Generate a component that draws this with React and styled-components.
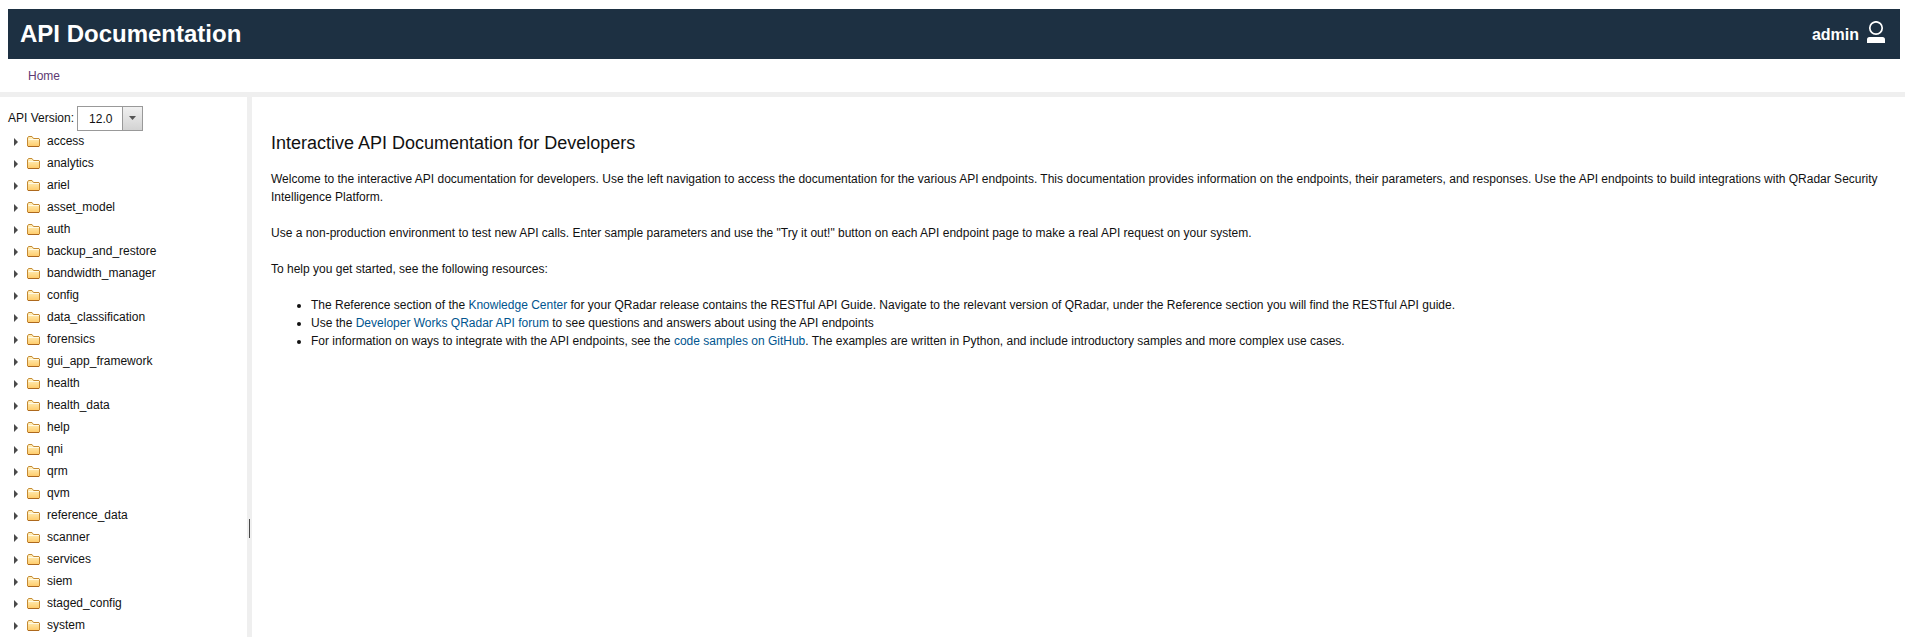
import React from 'react';
import styled, { createGlobalStyle } from 'styled-components';

const GlobalStyle = createGlobalStyle`
  *, *::before, *::after { box-sizing: border-box; }
  body {
    margin: 0;
    background: #fff;
    color: #111;
    font: 12px/18px "Liberation Sans", Helvetica, Arial, sans-serif;
  }
`;

const Page = styled.div`
  display: flex;
  flex-direction: column;
  height: 637px;
  overflow: hidden;
`;

const Header = styled.header`
  display: flex;
  flex: none;
  align-items: center;
  justify-content: space-between;
  height: 50px;
  margin: 9px 5px 0 8px;
  padding: 0 15px 0 12px;
  background: #1d3042;
  color: #fff;
`;

const Title = styled.h1`
  margin: 0;
  font-size: 24px;
  line-height: 48px;
  font-weight: 700;
`;

const User = styled.div`
  display: flex;
  align-items: center;
  gap: 8px;
  font-size: 16px;
  font-weight: 700;
`;

const UserName = styled.span`
  padding-top: 1px;
`;

const UserSvg = styled.svg`
  margin-bottom: 4px;
`;

const Crumbs = styled.nav`
  flex: none;
  height: 38px;
  padding: 8px 28px 0;
  border-bottom: 5px solid #efefef;
`;

const CrumbLink = styled.a`
  color: #5e3a73;
`;

const Body = styled.div`
  display: flex;
  flex: 1;
  min-height: 0;
`;

const Sidebar = styled.aside`
  flex: none;
  width: 247px;
  padding: 9px 0 0 8px;
  overflow: hidden;
`;

const VersionRow = styled.div`
  display: flex;
  align-items: center;
  gap: 3px;
  height: 25px;
`;

const VersionLabel = styled.span`
  padding-bottom: 2px;
`;

const Select = styled.div`
  display: flex;
  width: 66px;
  height: 25px;
  border: 1px solid #999;
  background: #fff;
`;

const SelectValue = styled.span`
  flex: 1;
  padding-left: 11px;
  line-height: 24px;
`;

const SelectButton = styled.span`
  display: flex;
  align-items: center;
  justify-content: center;
  width: 20px;
  padding-bottom: 1px;
  border-left: 1px solid #999;
  background: linear-gradient(#f0f0f0, #d3d3d3);
`;

const Tree = styled.ul`
  margin: 0;
  padding: 0;
  list-style: none;
`;

const TreeItem = styled.li`
  display: flex;
  align-items: center;
  height: 22px;
  padding-left: 6px;
`;

const TreeLabel = styled.span`
  margin-left: 7px;
  line-height: 20px;
  padding-bottom: 2px;
`;

const Splitter = styled.div`
  display: flex;
  flex: none;
  width: 5px;
  padding: 422px 0 0 2px;
  background: #efefef;
`;

const Grip = styled.div`
  width: 1px;
  height: 19px;
  background: #4a4a4a;
`;

const Main = styled.main`
  flex: 1;
  min-width: 0;
  padding: 35px 20px 0 19px;
`;

const Heading = styled.h2`
  margin: 0 0 16px;
  font-size: 18px;
  line-height: 22px;
  font-weight: 400;
`;

const Paragraph = styled.p`
  margin: 0 0 18px;
`;

const Resources = styled.ul`
  margin: 0;
  padding-left: 40px;
`;

const Link = styled.a`
  color: #00558f;
`;

const folders = [
  'access', 'analytics', 'ariel', 'asset_model', 'auth', 'backup_and_restore',
  'bandwidth_manager', 'config', 'data_classification', 'forensics',
  'gui_app_framework', 'health', 'health_data', 'help', 'qni', 'qrm', 'qvm',
  'reference_data', 'scanner', 'services', 'siem', 'staged_config', 'system',
];

function UserIcon() {
  return (
    <UserSvg width="18" height="22" viewBox="0 0 18 22">
      <circle cx="9" cy="7" r="6.200" fill="none" stroke="#fff" strokeWidth="1.700" />
      <path d="M0 22v-3.500a2.500 2.500 0 0 1 2.500-2.500h13a2.500 2.500 0 0 1 2.500 2.500V22z" fill="#fff" />
    </UserSvg>
  );
}

function Arrow() {
  return (
    <svg width="4" height="8" viewBox="0 0 4 8">
      <path d="M0 0l4 4-4 4z" fill="#4a4a4a" />
    </svg>
  );
}

const FolderSvg = styled.svg`
  margin: 0 0 1px 9px;
`;

function Folder() {
  return (
    <FolderSvg width="13" height="11" viewBox="0 0 13 11">
      <defs>
        <linearGradient id="folderFill" x1="0" y1="0" x2="0" y2="1">
          <stop offset="0" stopColor="#fff3c4" />
          <stop offset="1" stopColor="#ffcb68" />
        </linearGradient>
      </defs>
      <path d="M.5 10V2L1.500.5H5L6.500 2.500H12L12.500 3V10L12 10.500H1z" fill="url(#folderFill)" stroke="#c58a32" />
      <path d="M1.500 3.500H12" stroke="#fffae6" />
      <path d="M1 10.500H12" stroke="#ad681d" />
    </FolderSvg>
  );
}

export default function App() {
  return (
    <>
      <GlobalStyle />
      <Page>
        <Header>
          <Title>API Documentation</Title>
          <User>
            <UserName>admin</UserName>
            <UserIcon />
          </User>
        </Header>
        <Crumbs>
          <CrumbLink>Home</CrumbLink>
        </Crumbs>
        <Body>
          <Sidebar>
            <VersionRow>
              <VersionLabel>API Version:</VersionLabel>
              <Select>
                <SelectValue>12.0</SelectValue>
                <SelectButton>
                  <svg width="7" height="4" viewBox="0 0 7 4">
                    <path d="M0 0h7L3.500 4z" fill="#555" />
                  </svg>
                </SelectButton>
              </Select>
            </VersionRow>
            <Tree>
              {folders.map((name) => (
                <TreeItem key={name}>
                  <Arrow />
                  <Folder />
                  <TreeLabel>{name}</TreeLabel>
                </TreeItem>
              ))}
            </Tree>
          </Sidebar>
          <Splitter>
            <Grip />
          </Splitter>
          <Main>
            <Heading>Interactive API Documentation for Developers</Heading>
            <Paragraph>
              Welcome to the interactive API documentation for developers. Use the left navigation to access the
              documentation for the various API endpoints. This documentation provides information on the endpoints,
              their parameters, and responses. Use the API endpoints to build integrations with QRadar Security
              Intelligence Platform.
            </Paragraph>
            <Paragraph>
              Use a non-production environment to test new API calls. Enter sample parameters and use the "Try it
              out!" button on each API endpoint page to make a real API request on your system.
            </Paragraph>
            <Paragraph>To help you get started, see the following resources:</Paragraph>
            <Resources>
              <li>
                The Reference section of the <Link>Knowledge Center</Link> for your QRadar release contains the
                RESTful API Guide. Navigate to the relevant version of QRadar, under the Reference section you will
                find the RESTful API guide.
              </li>
              <li>
                Use the <Link>Developer Works QRadar API forum</Link> to see questions and answers about using the
                API endpoints
              </li>
              <li>
                For information on ways to integrate with the API endpoints, see the{' '}
                <Link>code samples on GitHub</Link>. The examples are written in Python, and include introductory
                samples and more complex use cases.
              </li>
            </Resources>
          </Main>
        </Body>
      </Page>
    </>
  );
}
